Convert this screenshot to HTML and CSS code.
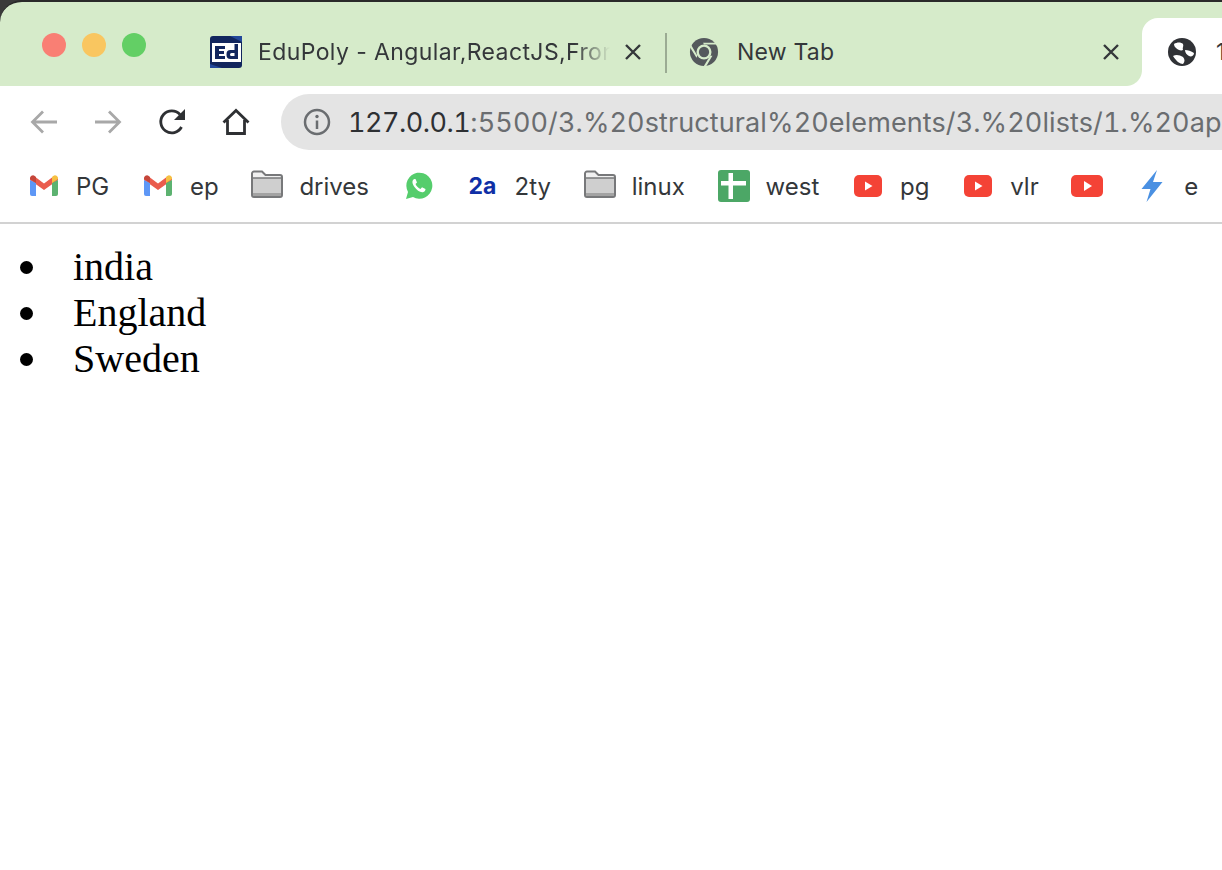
FILE: index.html
```html
<!DOCTYPE html>
<html lang="en">
<head>
    <meta charset="UTF-8">
    <meta name="viewport" content="width=device-width, initial-scale=1.0">
    <title>Lists</title>
    <link rel="stylesheet" href="styles.css">
</head>
<body>

<header class="browser">
    <div class="tabstrip">
        <div class="lights">
            <span class="light red"></span>
            <span class="light yellow"></span>
            <span class="light green"></span>
        </div>

        <div class="tab tab-edu">
            <svg class="favicon" viewBox="0 0 32 32">
                <rect width="32" height="32" rx="3" fill="#12265e"/>
                <path d="M0 28 L12 32 H0Z M20 0 L32 6 V0Z" fill="#23489a"/>
                <path d="M2 7 H31 V26 H2Z" fill="#fff"/>
                <path d="M5 10 H15 V13 H9 V15 H14 V18 H9 V20 H15 V23 H5Z" fill="#12265e"/>
                <path d="M24.500 8 H28 V23 H20.500 A4 4 0 0 1 16.500 19 V18 A4 4 0 0 1 20.500 14 H24.500Z M21.500 17 A1.500 1.500 0 0 0 20 18.500 V18.500 A1.500 1.500 0 0 0 21.500 20 H24.500 V17Z" fill="#12265e"/>
            </svg>
            <span class="tab-title fade">EduPoly - Angular,ReactJS,Front-end</span>
            <svg class="close" viewBox="0 0 16 16"><path d="M1 1 L15 15 M15 1 L1 15"/></svg>
        </div>
        <span class="tab-sep"></span>
        <div class="tab tab-new">
            <svg class="favicon chrome" viewBox="0 0 32 32">
                <circle cx="16" cy="16" r="15" fill="#54585c"/>
                <circle cx="16" cy="16" r="8" fill="#d6ebca"/>
                <circle cx="16" cy="16" r="5.500" fill="#54585c"/>
                <path d="M16 8 H30 L29 6 H15Z M9 20 L2 8 L1 11 L8 22Z M22.500 20 L15.500 31.500 L18.500 31 L25 20Z" fill="#d6ebca"/>
            </svg>
            <span class="tab-title">New Tab</span>
            <svg class="close" viewBox="0 0 16 16"><path d="M1 1 L15 15 M15 1 L1 15"/></svg>
        </div>
        <div class="tab tab-active">
            <svg class="favicon globe" viewBox="0 0 28 28">
                <circle cx="14" cy="14" r="14" fill="#303236"/>
                <path d="M6 6 C9 4 13 4 15 6 C16 8 14 10 15 12 C13 13 10 12 8 10 C7 9 6 8 6 6Z M17 12 C20 12 23 13 26 15 C26 18 23 19 21 18 C19 17 17 15 17 12Z M5 18 C8 16 12 17 15 19 C17 21 17 24 15 26 C12 26 8 23 5 18Z" fill="#fff"/>
            </svg>
            <span class="tab-title">127.0.0.1:5500</span>
        </div>
    </div>

    <div class="toolbar">
        <svg class="nav-icon muted" viewBox="0 0 28 28"><path d="M27 14 H3 M13 3.500 L2.500 14 L13 24.500"/></svg>
        <svg class="nav-icon muted" viewBox="0 0 28 28"><path d="M1 14 H25 M15 3.500 L25.500 14 L15 24.500"/></svg>
        <svg class="nav-icon dark" viewBox="0 0 28 28">
            <path d="M23.500 19 A11 11 0 1 1 22 6.500"/>
            <path class="solid" d="M27 1 V12 H16Z"/>
        </svg>
        <svg class="nav-icon dark" viewBox="0 0 28 28"><path d="M1.500 14.500 L14 2.500 L26.500 14.500 M5.500 12 V25.500 H22.500 V12"/></svg>

        <div class="omnibox">
            <svg class="info" viewBox="0 0 28 28">
                <circle cx="14" cy="14" r="12"/>
                <path d="M14 12.500 V21"/>
                <circle class="dot" cx="14" cy="8.500" r="1.700"/>
            </svg>
            <span class="url"><span class="host">127.0.0.1</span>:5500/3.%20structural%20elements/3.%20lists/1.%20application.html</span>
        </div>
    </div>

    <nav class="bookmarks">
        <a class="mark">
            <svg class="mark-icon" viewBox="0 0 32 32"><use href="#gmail"/></svg>
            <span>PG</span>
        </a>
        <a class="mark">
            <svg class="mark-icon" viewBox="0 0 32 32"><use href="#gmail"/></svg>
            <span>ep</span>
        </a>
        <a class="mark">
            <svg class="mark-icon" viewBox="0 0 32 32"><use href="#folder"/></svg>
            <span>drives</span>
        </a>
        <a class="mark">
            <svg class="mark-icon" viewBox="0 0 32 32">
                <path d="M4 29 L6 22 A13 13 0 1 1 11 27Z" fill="#55cd6c"/>
                <path d="M11.500 9.500 C10 11 10 13.500 12.500 17 C15 20.500 18.500 23 21.500 22 C23 21.500 23.500 20 23.500 19 L20 17.300 L18.500 19 C16.500 18.300 14.500 16.300 13.500 14 L15 12.500 L13.500 9 C12.800 9 12 9 11.500 9.500Z" fill="#fff"/>
            </svg>
        </a>
        <a class="mark">
            <span class="mark-icon twoa">2a</span>
            <span>2ty</span>
        </a>
        <a class="mark">
            <svg class="mark-icon" viewBox="0 0 32 32"><use href="#folder"/></svg>
            <span>linux</span>
        </a>
        <a class="mark">
            <svg class="mark-icon" viewBox="0 0 32 32">
                <rect width="32" height="32" rx="3" fill="#4ca766"/>
                <path d="M10.500 3 H15 V11 H28 V15.500 H15 V29 H10.500 V15.500 H3 V11 H10.500Z" fill="#fff"/>
            </svg>
            <span>west</span>
        </a>
        <a class="mark">
            <svg class="mark-icon" viewBox="0 0 32 32"><use href="#yt"/></svg>
            <span>pg</span>
        </a>
        <a class="mark">
            <svg class="mark-icon" viewBox="0 0 32 32"><use href="#yt"/></svg>
            <span>vlr</span>
        </a>
        <a class="mark">
            <svg class="mark-icon" viewBox="0 0 32 32">
                <rect y="5" width="32" height="22" rx="5" fill="#f44336"/>
                <path d="M13 11 L21 16 L13 21Z" fill="#fff"/>
            </svg>
        </a>
        <a class="mark">
            <svg class="mark-icon" viewBox="0 0 32 32"><path d="M21 0 L5.500 19 H14.500 L10.500 32 L26.500 12 H17Z" fill="#4a90e2"/></svg>
            <span>e</span>
        </a>
    </nav>
</header>

<ul class="countries">
    <li>india</li>
    <li>England</li>
    <li>Sweden</li>
</ul>

<svg class="defs" width="0" height="0">
    <defs>
        <g id="gmail">
            <path d="M2 10 L16 20 L30 10 V8 L26 6 L16 13.500 L6 6 L2 8Z" fill="#ea5c4d"/>
            <path d="M2 10 V24 A2 2 0 0 0 4 26 H8 V13Z" fill="#5e97f6"/>
            <path d="M30 10 V24 A2 2 0 0 1 28 26 H24 V13Z" fill="#5cb270"/>
            <path d="M2 8 A3 3 0 0 1 6 5.500 L8 7 V13 L2 9Z" fill="#c5463a"/>
            <path d="M30 8 A3 3 0 0 0 26 5.500 L24 7 V13 L30 9Z" fill="#f6c042"/>
        </g>
        <g id="folder">
            <path d="M1 3.500 A2 2 0 0 1 3 1.500 H11 L14.500 5 H29 A2 2 0 0 1 31 7 V25 A2 2 0 0 1 29 27 H3 A2 2 0 0 1 1 25Z" fill="#f0f0f0" stroke="#77787a" stroke-width="2"/>
            <path d="M2 8 H30 V26 H2Z" fill="#cfcfcf"/>
            <path d="M2 8 H30" stroke="#77787a" stroke-width="1.500"/>
            <path d="M2 23 H30 V26 H2Z" fill="#a3a3a3"/>
        </g>
        <g id="yt">
            <rect x="2" y="5" width="28" height="22" rx="5" fill="#f44336"/>
            <path d="M13 11.500 L20.500 16 L13 20.500Z" fill="#fff"/>
        </g>
    </defs>
</svg>

</body>
</html>
```

FILE: styles.css
```css
/* page */
html, body {
    margin: 0;
    padding: 0;
    background-color: #fff;
}

body {
    width: 1222px;
    height: 870px;
    overflow: hidden;
    font-family: "Inter", "Liberation Sans", sans-serif;
}

.defs {
    display: block;
}

/* browser frame */
.browser {
    background-color: #3a3a3a;
}

.tabstrip {
    display: flex;
    height: 84px;
    border-top: 2px solid #2a2a2a;
    border-top-left-radius: 22px;
    background-color: #d6ebca;
    overflow: hidden;
}

.lights {
    display: flex;
    gap: 16px;
    flex: none;
    width: 210px;
    padding: 31px 0 0 42px;
    box-sizing: border-box;
}

.light {
    width: 24px;
    height: 24px;
    border-radius: 50%;
}

.red { background-color: #f97f74; }
.yellow { background-color: #f9c660; }
.green { background-color: #63cf65; }

/* tabs */
.tab {
    display: flex;
    align-items: center;
    flex: none;
    height: 68px;
    margin-top: 16px;
    color: #34373a;
    font-size: 23px;
    letter-spacing: 0.2px;
}

.tab-edu {
    width: 437px;
    letter-spacing: 0.4px;
}

.tab-edu .close {
    margin-right: 6px;
}

.tab-new {
    width: 475px;
    padding-left: 22px;
    box-sizing: border-box;
}

.tab-sep {
    flex: none;
    width: 2px;
    height: 40px;
    margin: 31px 0 0 18px;
    background-color: #9bab93;
}

.tab-active {
    position: relative;
    width: 200px;
    padding-left: 26px;
    background-color: #fff;
    border-radius: 16px 16px 0 0;
}

/* flare where the active tab meets the toolbar */
.tab-active::before {
    content: "";
    position: absolute;
    left: -16px;
    bottom: 0;
    width: 16px;
    height: 16px;
    background: radial-gradient(circle at 0 0, #d6ebca 15.500px, #fff 16.500px);
}

.favicon {
    flex: none;
    width: 32px;
    height: 32px;
}

.chrome {
    width: 30px;
    height: 30px;
}

.globe {
    width: 28px;
    height: 28px;
}

.tab-title {
    flex: 1;
    margin-left: 16px;
    white-space: nowrap;
    overflow: hidden;
}

.globe + .tab-title {
    margin-left: 20px;
}

.chrome + .tab-title {
    margin-left: 18px;
}

.fade {
    -webkit-mask-image: linear-gradient(to right, #000 90%, transparent 100%);
    mask-image: linear-gradient(to right, #000 90%, transparent 100%);
}

.close {
    flex: none;
    width: 16px;
    height: 16px;
    margin: 0 23px 0 15px;
    fill: none;
    stroke: #34373a;
    stroke-width: 2.400;
}

/* address row */
.toolbar {
    display: flex;
    align-items: center;
    height: 72px;
    padding-left: 30px;
    background-color: #fff;
}

.nav-icon {
    flex: none;
    width: 28px;
    height: 28px;
    margin-right: 36px;
    fill: none;
    stroke-width: 2.800;
}

.muted { stroke: #a8a8a8; }
.dark { stroke: #2e3033; }
.solid { fill: #2e3033; stroke: none; }

.omnibox {
    display: flex;
    align-items: center;
    flex: none;
    width: 1000px;
    height: 56px;
    margin-left: -5px;
    padding-left: 22px;
    box-sizing: border-box;
    border-radius: 28px 0 0 28px;
    background-color: #e4e4e4;
    font-size: 27px;
    font-feature-settings: "tnum";
    letter-spacing: 0.1px;
    color: #6a6d70;
    overflow: hidden;
}

.info {
    flex: none;
    width: 28px;
    height: 28px;
    margin-right: 17px;
    fill: none;
    stroke: #6a6d70;
    stroke-width: 2.500;
}

.info .dot {
    fill: #6a6d70;
    stroke: none;
}

.url {
    white-space: nowrap;
}

.host {
    color: #2e3033;
    letter-spacing: -0.5px;
}

/* bookmarks */
.bookmarks {
    display: flex;
    align-items: center;
    height: 66px;
    padding: 0 0 8px 28px;
    box-sizing: border-box;
    gap: 32.750px;
    background-color: #fff;
    border-bottom: 2px solid #d2d2d2;
    color: #34373a;
    font-size: 24px;
    white-space: nowrap;
}

.mark {
    display: flex;
    align-items: center;
    gap: 16px;
}

.mark-icon {
    flex: none;
    width: 32px;
    height: 32px;
}

.twoa {
    color: #0f2fa6;
    font-weight: 700;
    font-size: 23px;
    line-height: 32px;
    text-align: center;
}

/* page content */
.countries {
    margin: 20px 0 0;
    padding: 0 0 0 20px;
    list-style: none;
    font-family: "Liberation Serif", serif;
    font-size: 40px;
    line-height: 46px;
    color: #000;
}

.countries li {
    display: flex;
    align-items: center;
}

.countries li::before {
    content: "";
    flex: none;
    width: 13px;
    height: 13px;
    margin-right: 40px;
    border-radius: 50%;
    background-color: #000;
}
```
